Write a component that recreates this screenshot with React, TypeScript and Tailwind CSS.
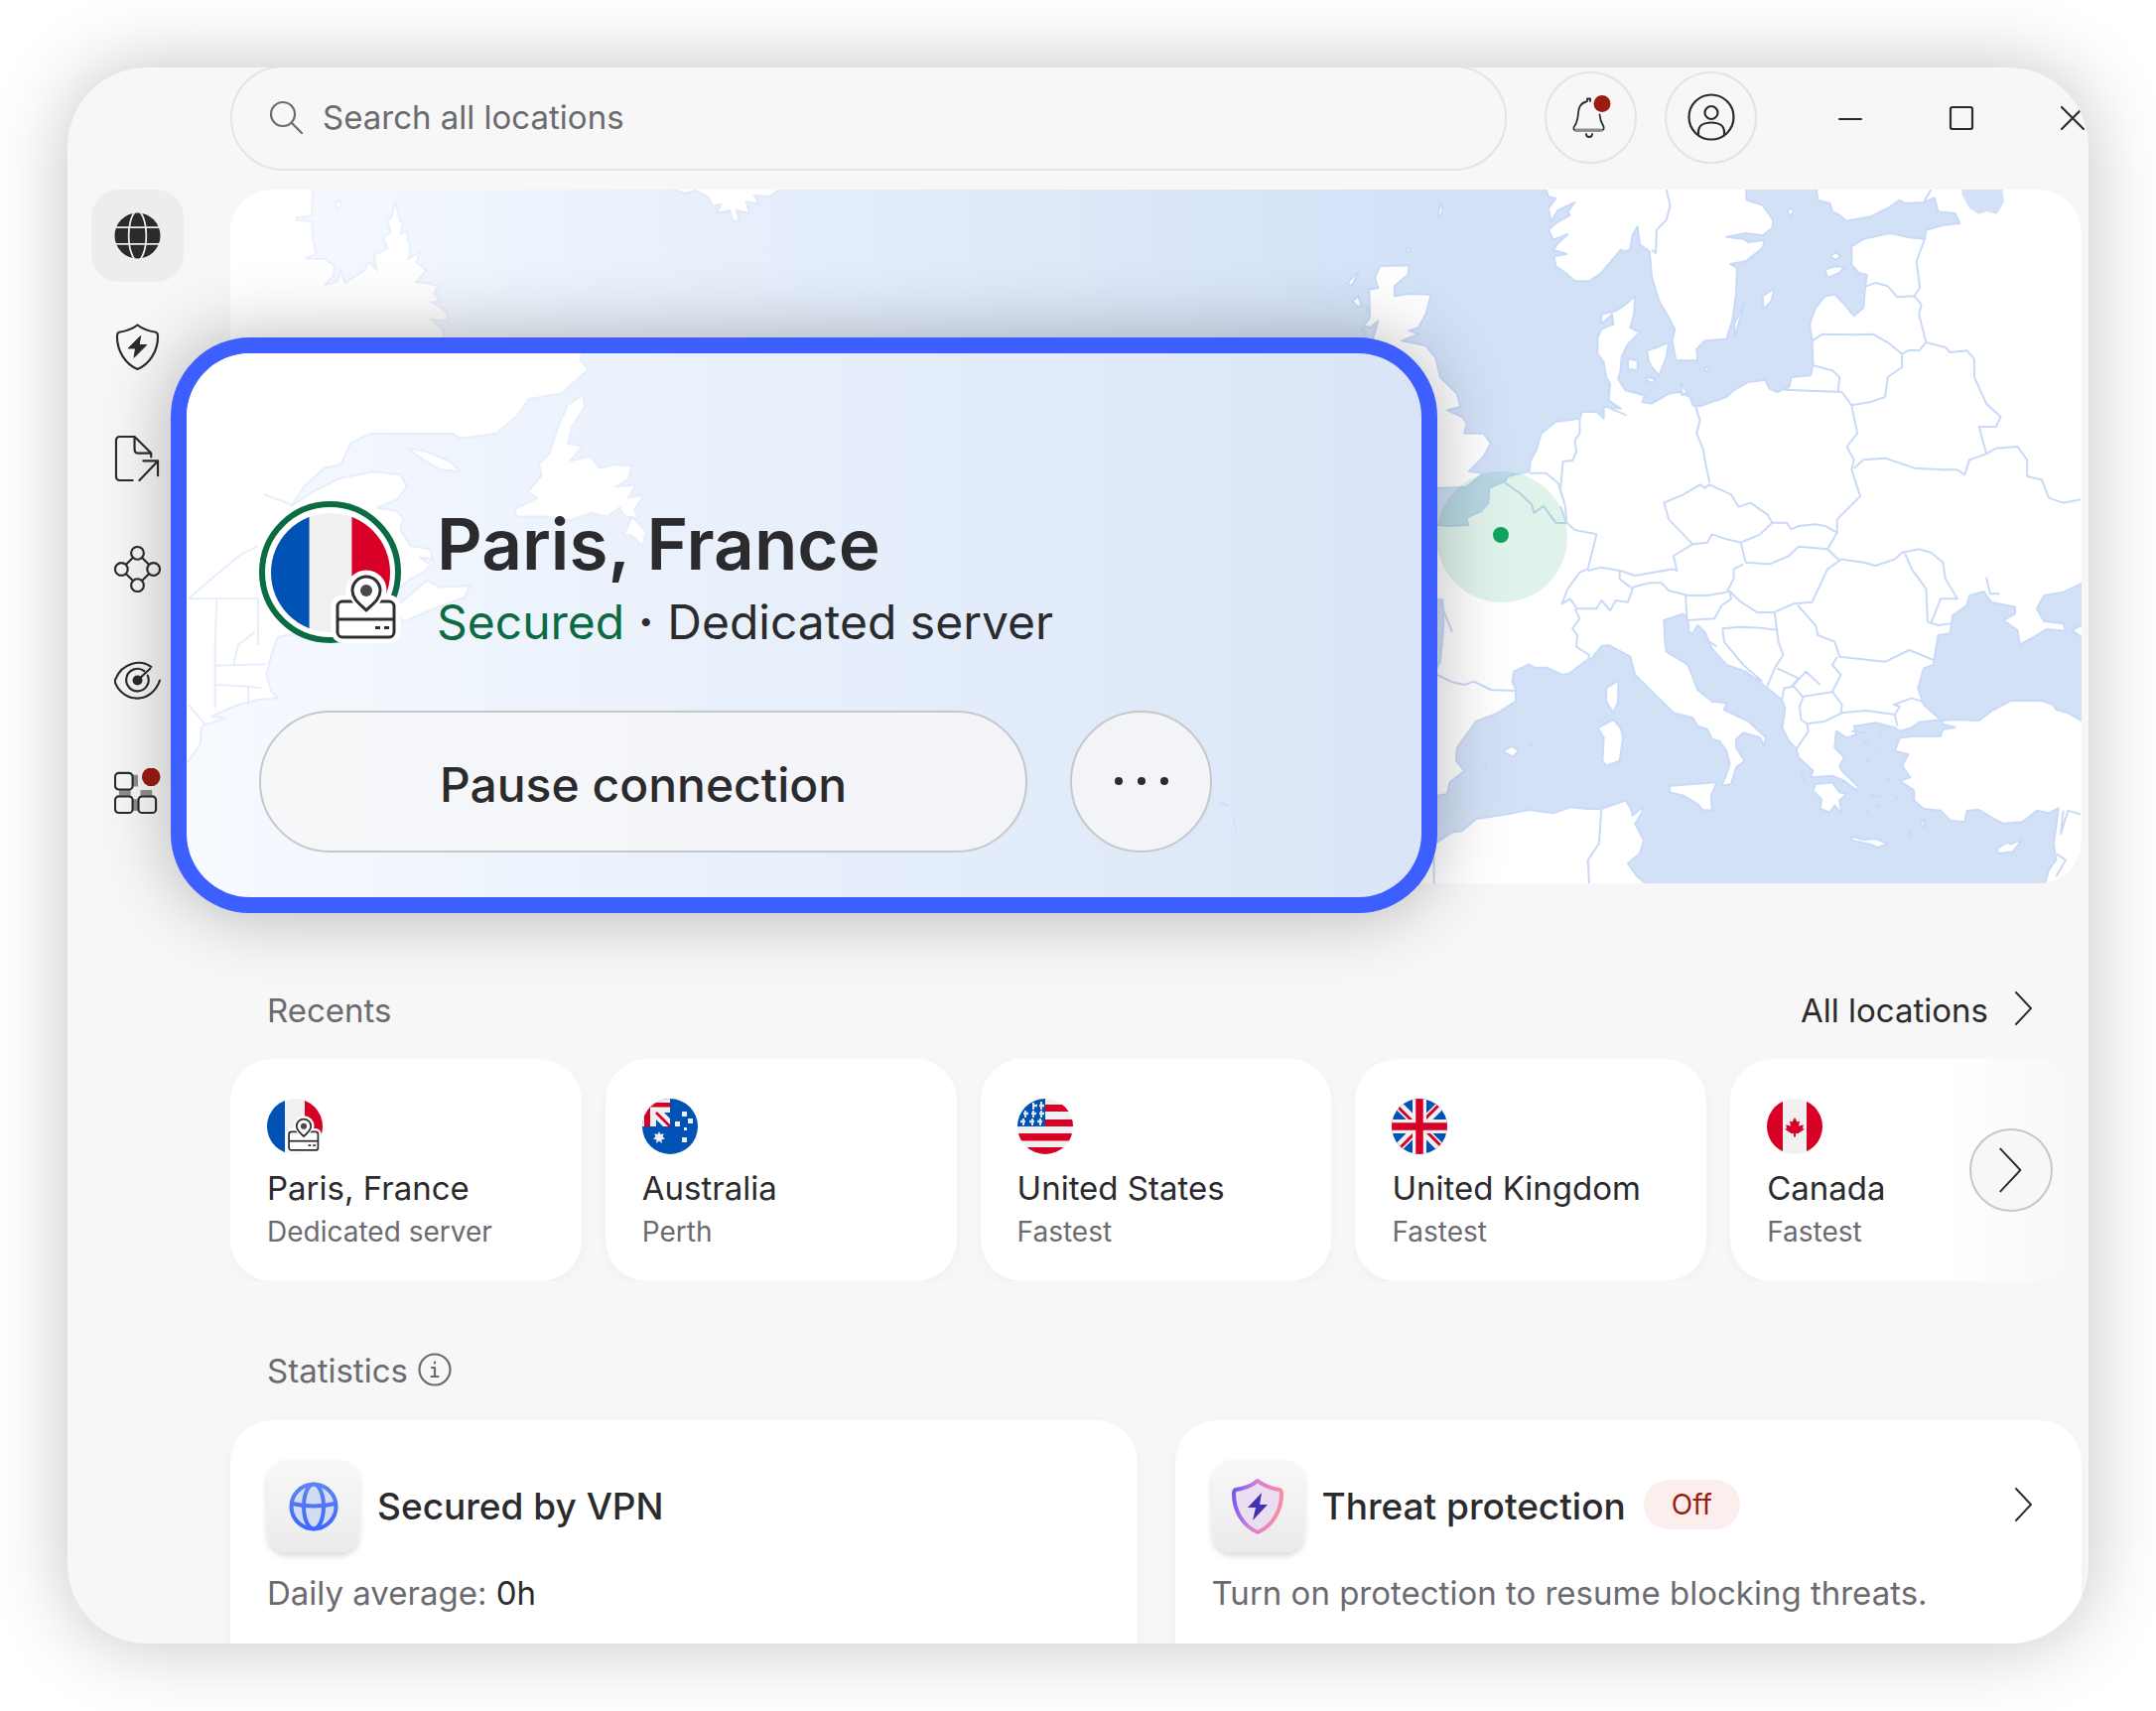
import React from "react";

const EUROPE_LAND = [
  // Norway and Sweden
  "M325,400 325,423 330,445 345,450 330,480 335,520 350,485 385,462 370,490 375,500 345,525 330,545 340,575 370,558 350,585 340,605 368,618 342,625 345,655 370,680 385,700 415,700 440,675 460,640 480,605 490,610 500,603 505,560 515,535 520,590 540,610 545,690 560,760 580,810 593,845 587,880 595,940 640,940 638,905 655,880 700,875 712,820 720,740 722,660 708,648 740,640 775,600 780,575 745,582 735,572 700,566 740,555 775,562 795,540 797,515 775,470 742,455 740,400Z",
  // Mainland
  "M885,400 890,455 915,465 920,490 935,500 950,518 1000,505 1040,475 1060,455 1070,465 1110,462 1132,448 1140,490 1175,495 1185,525 1150,530 1115,545 1112,572 1080,568 1040,555 985,572 960,595 960,650 975,675 992,680 988,720 985,780 965,805 945,770 925,740 905,745 885,780 873,830 878,880 880,950 875,985 835,990 830,1020 805,1035 790,1025 780,998 745,1005 715,1030 700,1050 670,1065 645,1078 630,1075 625,1050 600,1035 580,1040 545,1070 525,1065 530,1045 490,1030 475,995 480,970 482,930 495,890 520,855 500,840 508,800 510,745 490,770 470,790 440,800 440,830 462,800 465,830 440,845 432,870 432,920 445,945 450,990 458,1010 455,1060 480,1085 445,1080 445,1115 430,1095 400,1095 395,1115 345,1125 315,1160 305,1210 292,1245 290,1275 270,1282 245,1290 240,1305 207,1325 205,1370 190,1395 160,1415 163,1437 120,1440 60,1430 60,1660 110,1662 112,1740 105,1850 90,1890 0,1900 0,2255 99,2255 120,2250 125,2215 155,2180 138,2150 140,2110 180,2030 225,2005 262,1970 262,1935 255,1910 258,1880 290,1858 300,1868 325,1868 360,1890 375,1885 405,1850 420,1840 440,1803 455,1800 500,1835 510,1890 545,1940 590,2005 630,2020 640,2045 660,2055 670,2085 685,2090 700,2120 707,2160 700,2190 690,2225 710,2220 720,2170 738,2150 720,2110 720,2085 735,2065 770,2080 778,2105 782,2080 745,2030 695,1995 700,1975 670,1970 640,1935 620,1860 575,1820 572,1785 570,1725 610,1705 620,1725 622,1760 630,1765 640,1740 655,1760 670,1810 700,1860 740,1880 785,1930 815,1965 822,1990 816,2050 830,2090 845,2115 850,2140 880,2180 875,2200 920,2195 945,2210 970,2240 975,2230 940,2180 935,2165 945,2140 925,2110 928,2060 950,2080 970,2070 965,2045 1010,2035 1050,2050 1060,2060 1085,2050 1100,2033 1145,2026 1110,1980 1098,1930 1110,1870 1130,1860 1140,1770 1165,1765 1170,1710 1200,1680 1205,1650 1235,1638 1250,1670 1300,1685 1300,1705 1275,1725 1305,1755 1310,1798 1340,1775 1365,1752 1405,1757 1400,1735 1360,1728 1345,1690 1360,1650 1400,1640 1436,1615 1520,1590 1520,400Z",
  // Turkey and the Levant
  "M1520,2050 1436,2027 1410,2005 1385,1995 1380,1980 1355,1968 1290,1968 1250,2000 1225,2028 1175,2025 1148,2028 1150,2040 1175,2048 1150,2055 1145,2075 1090,2075 1060,2080 1050,2120 1078,2130 1065,2165 1082,2200 1060,2210 1090,2240 1090,2270 1110,2295 1145,2300 1165,2330 1195,2335 1200,2300 1225,2298 1250,2320 1275,2340 1315,2335 1345,2300 1370,2308 1390,2293 1385,2350 1380,2400 1385,2450 1370,2480 1360,2530 1520,2530Z",
  // North Africa
  "M99,2395 130,2365 150,2362 180,2325 240,2312 290,2298 340,2308 375,2290 410,2295 440,2295 490,2270 500,2290 505,2315 525,2290 525,2305 510,2340 528,2390 520,2430 495,2460 515,2500 540,2530 0,2530 0,2440Z",
  // Great Britain
  "M-21,655 41,652 38,680 10,715 10,745 40,738 86,740 75,800 60,840 40,850 60,860 25,880 75,895 95,930 105,990 140,1040 147,1080 120,1090 150,1110 160,1130 155,1160 195,1160 210,1190 195,1230 165,1275 195,1280 160,1322 105,1325 0,1350 -60,1100 -34,870 -24,820 -40,840 -55,835 -41,810 -43,725 -24,720 -31,690Z",
  // Islands
  "M-65,670 -70,690 -80,715 -88,705Z M-78,760 -65,745 -58,778 -68,775Z M-48,780l5,8 -5,5z M-60,840l10,15 -6,8z",
  "M105,462l5,20 -3,20 -6,0z M36,600l8,5 -2,8 -8,-4z",
  "M495,935 515,940 515,970 495,965Z M535,910 555,900 580,885 575,930 560,985 545,960 538,940Z M535,990l18,5 -6,12 -12,-6z M605,1010 618,1035 608,1045Z M657,958l8,8 -6,8 -4,-6z",
  "M800,722 793,760 777,785 775,745Z M738,765 718,865 716,830Z M905,665 925,655 945,657 935,675 910,690Z M925,612l12,12 -10,12 -10,-10z M832,478l8,10 -6,14 -8,-10z",
  "M885,2220 920,2215 935,2245 950,2250 935,2270 940,2310 925,2285 915,2305 895,2295 897,2265 880,2240Z",
  "M960,2378 985,2388 1010,2385 1035,2400 1015,2412 1000,2403 960,2390Z M1262,2415 1285,2395 1290,2402 1315,2388 1295,2425 1265,2430Z",
  "M582,2225 610,2222 680,2215 668,2255 670,2300 650,2298 640,2280 610,2255 582,2245Z",
  "M432,2050 465,2025 480,2050 485,2080 478,2150 450,2165 442,2150 445,2080Z M450,1930 475,1908 475,1970 465,2005 450,1970Z M235,2120 255,2105 268,2120 255,2138Z M1105,2335l8,-8 -2,22 -6,-2z",
  "M1440,1738 1418,1755 1440,1778Z",
].join(" ");

const EUROPE_BORDERS = [
  "M575,423 583,470 575,515 555,545 553,615 545,605",
  "M1125,423 1110,462",
  "M635,1075 645,1120 638,1160 652,1210 655,1240 665,1310",
  "M645,1315 610,1345 570,1370 580,1420 600,1450 630,1495 660,1490 670,1465 700,1480 730,1490 770,1465 795,1430 785,1405 750,1370 725,1382 710,1345 665,1315 655,1325Z",
  "M820,1028 940,1035 960,1075 972,1160 950,1200 965,1240 960,1270 978,1350 930,1420 930,1460",
  "M795,1430 825,1430 835,1450 850,1440 885,1435 905,1440 930,1460 910,1510",
  "M910,1510 850,1502 830,1530 790,1555 740,1550 730,1490",
  "M965,1265 985,1240 1030,1235 1090,1265 1150,1270 1180,1270 1195,1285 1205,1240 1240,1222 1260,1205 1305,1200 1325,1240 1325,1290 1355,1300 1370,1355 1400,1370 1436,1360",
  "M1115,885 1155,900 1165,915 1200,910 1215,935 1215,990 1240,1070 1270,1110 1260,1140 1225,1140 1240,1222",
  "M878,880 900,860 965,862 1005,860 1040,890 1065,920 1065,960 1035,990 1030,1050 1000,1065 960,1075",
  "M1065,920 1080,908 1100,910 1115,885 1100,800 1105,770 1090,745 1055,748 1035,715 1010,705 990,715",
  "M1112,572 1095,640 1102,720 1090,745",
  "M880,955 920,970 935,990 932,1032",
  "M395,1115 395,1160 385,1180 388,1215 380,1242 360,1245 355,1330 365,1380",
  "M290,1280 325,1280 350,1310 365,1380 368,1430 385,1452 430,1465 412,1570 395,1580 370,1630 358,1675 375,1660 390,1690 430,1690 440,1665 458,1695 470,1665 495,1670 505,1630 478,1600 478,1575 440,1565 412,1575",
  "M240,1310 270,1340 295,1375 300,1400 320,1380 345,1430 368,1432 355,1380",
  "M480,1575 510,1590 590,1570 597,1575 590,1530 630,1495",
  "M505,1625 540,1612 565,1612 580,1635 620,1650 660,1650 700,1640 715,1600 715,1570 735,1555",
  "M385,1690 395,1720 380,1750 390,1770 388,1805 415,1830 412,1845",
  "M615,1650 618,1725 675,1720 690,1680 710,1660 705,1635 730,1670 765,1702 800,1700 840,1675 878,1670 910,1570 935,1545 910,1510",
  "M935,1540 985,1550 1010,1560 1050,1540 1065,1520 1100,1510 1125,1520 1150,1550 1155,1600 1180,1660 1145,1660 1125,1735",
  "M1070,1520 1085,1570 1115,1630 1118,1730 1140,1740 1165,1735",
  "M800,1700 808,1790 818,1830 800,1870 785,1925",
  "M808,1755 770,1748 730,1745 692,1750 695,1790 735,1860 775,1910",
  "M848,1680 885,1740 890,1770 925,1790 935,1835 1030,1850 1080,1815 1130,1845",
  "M930,1835 920,1860 938,1890 920,1940 940,1980 938,2005 990,1998 1050,2010 1055,2045",
  "M1050,2010 1060,1985 1048,1980 1085,1960 1110,1972",
  "M920,1942 860,1955 852,1985 855,2025 868,2038 905,2030 940,2005",
  "M868,2040 870,2060 845,2115 M815,1965 820,1930 840,1925 858,1955",
  "M840,1920 865,1880 895,1920 M805,1870 850,1900 835,1925",
  "M99,1890 130,1912 155,1920 175,1910 210,1935 260,1938",
  "M1240,1595 1248,1645 1268,1645 M1400,2300 1395,2370 1410,2300 1436,2312 M1385,2430 1405,2450 1385,2500",
  "M440,2295 435,2400 412,2450 415,2530 M92,2440 92,2530 M458,1085 492,1105 M103,1665 130,1760",
  "M940,2210l28,25 M960,2060l30,5 M1015,2070l8,6 M985,2090l10,10 M1010,2110l6,6 M990,2150l10,4 M1030,2200l10,8 M1000,2250l20,10 M1020,2280l-10,12 M1050,2260l10,6 M855,2180l6,30 M990,2300l6,8 M1080,2360l4,20 M735,1885l40,25 M665,1790l15,15 M198,2160l6,20 M288,2095l8,10 M433,2025l4,10 M505,1900l6,10",
].join(" ");

function Europe() {
  return (
    <svg x="1400" y="50" width="760" height="840" viewBox="0 0 1568 2520" preserveAspectRatio="none" overflow="visible">
      <path d={EUROPE_LAND} fill="#fff" stroke="#c8daf8" strokeWidth="2" strokeLinejoin="round" vectorEffect="non-scaling-stroke" />
      <path d="M1187,400 1190,440 1205,480 1225,497 1240,490 1262,497 1277,460 1272,400Z" fill="#d3e1f7" />
      <path d={EUROPE_BORDERS} fill="none" stroke="#c8daf8" strokeWidth="2" strokeLinejoin="round" vectorEffect="non-scaling-stroke" />
    </svg>
  );
}

function WorldMap() {
  return (
    <svg viewBox="232 191 1865 699" preserveAspectRatio="xMaxYMid slice" className="block h-full w-full" aria-hidden="true">
      <defs>
        <linearGradient id="sea" gradientUnits="userSpaceOnUse" x1="232" y1="0" x2="1440" y2="0">
          <stop offset="0" stopColor="#f8fbff" />
          <stop offset="0.3" stopColor="#ebf2fc" />
          <stop offset="1" stopColor="#d3e1f7" />
        </linearGradient>
      </defs>
      <rect x="232" y="191" width="1865" height="699" fill="url(#sea)" />
      <svg x="60" y="50" width="700" height="560" viewBox="0 0 1568 1568" preserveAspectRatio="none" overflow="visible">
        <path
          d="M380,380 575,380 570,430 570,470 535,474 535,482 570,484 572,540 580,575 555,590 600,590 620,610 618,640 598,665 625,655 635,625 645,658 690,620 698,598 715,620 710,580 740,560 730,530 748,515 738,480 748,475 758,430 768,480 775,490 770,520 785,510 785,540 792,545 788,590 815,570 805,600 828,622 805,655 855,665 845,690 860,710 840,712 875,740 875,765 840,762 865,790 870,840 380,840Z M622,430l10,-5 4,15 -10,12z"
          fill="#fff"
          stroke="#e8f0fc"
          strokeWidth="2"
          vectorEffect="non-scaling-stroke"
        />
      </svg>
      <path d="M672,188 690,195 700,192 713,198 718,208 726,206 722,215 735,212 738,222 745,224 742,212 755,215 752,203 765,206 760,197 775,198 790,188Z" fill="#fff" stroke="#dfe9fa" strokeWidth="2" />
      <Europe />
      <circle cx="1513" cy="541" r="66" fill="#0fa55f" fillOpacity="0.13" />
      <circle cx="1512" cy="539" r="8" fill="#12a45f" />
    </svg>
  );
}

function AtlanticMap() {
  return (
    <svg viewBox="188 356 1244 548" preserveAspectRatio="xMinYMin slice" className="h-full w-full" aria-hidden="true">
      <defs>
        <linearGradient id="atlantic" x1="0" y1="0" x2="1" y2="0">
          <stop offset="0" stopColor="#f7faff" />
          <stop offset="0.35" stopColor="#ebf2fc" />
          <stop offset="1" stopColor="#d9e5f7" />
        </linearGradient>
      </defs>
      <rect x="188" y="356" width="1244" height="548" fill="url(#atlantic)" />
      <g fill="#fff" stroke="#e6eefc" strokeWidth="2" strokeLinejoin="round">
        <svg x="60" y="420" width="500" height="480" viewBox="0 0 1500 1440" overflow="visible">
          <path
            vectorEffect="non-scaling-stroke"
            d="M370,-210 1581,-210 1575,-172 1599,-144 1556,-105 1519,-71 1420,-54 1380,0 1320,50 1210,65 1190,52 940,50 880,80 850,145 800,155 740,210 700,270 760,230 850,185 950,165 1030,175 1050,210 1020,250 960,275 1020,285 1040,310 1030,340 1060,390 1120,400 1130,440 1100,470 1060,490 1000,540 950,560 830,600 750,650 660,665 640,720 625,780 640,830 660,850 600,855 540,870 460,905 500,910 430,935 425,990 390,1040 370,1050Z"
          />
          <path vectorEffect="non-scaling-stroke" d="M1010,580 1110,495 1150,515 1240,510 1225,545 1130,580 1040,620Z M1050,95 1110,105 1180,135 1210,165 1150,160 1100,130Z M1090,425l35,5 -10,12z" />
          <path vectorEffect="non-scaling-stroke" fill="none" d="M390,550H600 V690 M390,550 470,480 550,415 600,390 M475,550 470,700 470,880 M590,650 540,690 525,750 M470,752 620,748 M470,810 570,815 610,820 M570,815 570,870 M620,235 700,265 M390,870 440,930" />
        </svg>
        <svg x="160" y="340" width="1300" height="590" viewBox="0 0 1568 1568" preserveAspectRatio="none" overflow="visible">
          <path
            vectorEffect="non-scaling-stroke"
            d="M515,155 518,185 502,240 497,285 515,290 500,330 525,318 535,350 555,340 575,345 570,380 555,400 580,395 570,430 590,420 578,460 582,485 565,478 560,455 545,480 525,470 500,490 470,480 435,480 432,460 460,430 448,415 465,370 462,340 475,310 485,240 497,180Z M575,480 592,520 588,560 575,530 565,530Z"
          />
          <path vectorEffect="non-scaling-stroke" stroke="#d3e0f6" fill="none" d="M1290,1245l10,10 M1306,1290l3,35" />
        </svg>
      </g>
    </svg>
  );
}

type IconProps = { className?: string };

function ServerBadge({ className, bold }: IconProps & { bold?: boolean }) {
  const w = bold ? 3 : 3.4;
  return (
    <svg viewBox="0 0 66 70" className={className} aria-hidden="true" overflow="visible" fill="#fff" stroke="#2f2f31" strokeWidth={w} strokeLinejoin="round">
      <g stroke="#fff" strokeWidth="13">
        <rect x="4" y="30" width="57" height="35" rx="5" />
        <circle cx="33" cy="19" r="14" />
      </g>
      <rect x="4" y="30" width="57" height="36" rx="5" />
      <path d="M4 48h57" fill="none" />
      <path d="M33 38c-6-6-14-11-14-20a14 14 0 0 1 28 0c0 9-8 14-14 20z" stroke="#fff" strokeWidth="9" />
      <path d="M33 39c-6-6-14-11-14-20a14 14 0 0 1 28 0c0 9-8 14-14 20z" />
      <circle cx="33" cy="19" r="6" fill="#4a4a4c" stroke="none" />
      <path d="M42 56.500h5M51 56.500h5" />
    </svg>
  );
}

type Country = "fr" | "au" | "us" | "gb" | "ca";

function Flag({ country, className }: { country: Country; className?: string }) {
  const clip = `flag-${country}`;
  return (
    <svg viewBox="0 0 56 56" className={className} aria-hidden="true">
      <defs>
        <clipPath id={clip}>
          <circle cx="28" cy="28" r="28" />
        </clipPath>
      </defs>
      <g clipPath={`url(#${clip})`}>
        {country === "fr" && (
          <>
            <path fill="#f0f0f0" d="M0 0h56v56H0z" />
            <path fill="#0052b4" d="M0 0h18v56H0z" />
            <path fill="#d80027" d="M38 0h18v56H38z" />
          </>
        )}
        {country === "au" && (
          <>
            <path fill="#0052b4" d="M0 0h56v56H0z" />
            <path fill="#f0f0f0" d="M0 0h28v28H0z" />
            <path fill="#d80027" d="M2 28V4h26v4.500H8V28z" />
            <path fill="#0052b4" d="M28 14v6l-6-6zM14 21l7 7h-7z" />
            <path stroke="#d80027" strokeWidth="2.600" d="M14 14l14 14" />
            <path fill="#f0f0f0" d="M17 33l1.500 3 3.500-.7-1.500 3L23 40.500l-3.300.8V45L17 42.500 14.300 45v-3.700l-3.300-.8 2.500-2.200-1.500-3 3.500.7z" />
            <path fill="#f0f0f0" d="M40 13h5v5h-5zM46 20h5v5h-5zM33 23h5v5h-5zM42 29h3v3h-3zM40 39h5v5h-5z" />
          </>
        )}
        {country === "us" && (
          <>
            <path fill="#f0f0f0" d="M0 0h56v56H0z" />
            <path fill="#d80027" d="M28 6h28v7H28zM28 21h28v7H28zM0 35h56v7.500H0zM6 49h44v7H6z" />
            <path fill="#0052b4" d="M0 0h28v28H0z" />
            <path stroke="#dfe6f2" strokeWidth="2.400" d="M15 7h5M22 7h5M6 15h5M14 15h5M22 15h5M3 23h5M12 23h5M20 23h5" />
            <path stroke="#dfe6f2" strokeWidth="2" d="M16 4v7M24 3v8M8 12v7M16 12v7M24 12v7M6 20v7M15 20v7M23 20v7" />
          </>
        )}
        {country === "gb" && (
          <>
            <path fill="#0052b4" d="M0 0h56v56H0z" />
            <path stroke="#f0f0f0" strokeWidth="9" d="M4 4l48 48M52 4L4 52" />
            <path stroke="#d80027" strokeWidth="3" d="M6 8l16 16M48 6L34 20M50 48L34 32M8 50l16-16" />
            <path stroke="#f0f0f0" strokeWidth="14" d="M28 0v56M0 28h56" />
            <path stroke="#d80027" strokeWidth="7.500" d="M28 0v56M0 28h56" />
          </>
        )}
        {country === "ca" && (
          <>
            <path fill="#f0f0f0" d="M0 0h56v56H0z" />
            <path fill="#d80027" d="M0 0h16v56H0zM40 0h16v56H40z" />
            <path fill="#d80027" d="M28 19l2.500 4.500 2.500-1-1 5 5-1-1 3 1.500 1.500-6 4h-2.500v3.500h-2V35H24.500l-6-4 1.500-1.500-1-3 5 1-1-5 2.500 1z" />
          </>
        )}
      </g>
    </svg>
  );
}

function Chevron({ className, weight = 2 }: IconProps & { weight?: number }) {
  return (
    <svg viewBox="0 0 20 36" className={className} aria-hidden="true" fill="none" stroke="#2f2f31" strokeWidth={weight} strokeLinecap="round" strokeLinejoin="round">
      <path d="M2 2l15 16L2 34" />
    </svg>
  );
}

const line = { fill: "none", stroke: "#2b2b2d", strokeWidth: 2.2, strokeLinecap: "round", strokeLinejoin: "round" } as const;

const navItems = [
  {
    label: "VPN",
    icon: (
      <>
        <circle cx="24" cy="24" r="23.500" fill="#2b2b2d" />
        <path d="M0 15.500h48M0 32.500h48" stroke="#ededed" strokeWidth="1.800" />
        <path d="M24-4C12 8 12 40 24 52M24-4c12 12 12 44 0 56" fill="none" stroke="#ededed" strokeWidth="1.800" />
      </>
    ),
  },
  {
    label: "Threat protection",
    icon: (
      <g {...line}>
        <path d="M24 1.500c5 4 13 6.500 19 7.500 2 1 2 2 2 4 0 16-9 29-21 34C12 42 3 29 3 13c0-2 0-3 2-4 6-1 14-3.500 19-7.500z" />
        <path d="M27 13L14.500 25.500H22L20.500 35 33.500 22H26z" fill="#2b2b2d" strokeWidth="1" />
      </g>
    ),
  },
  {
    label: "File sharing",
    icon: (
      <g {...line}>
        <path d="M19 47H6q-4 0-4-4V6q0-4 4-4h15l17 17v4M21 2v13q0 4 4 4h13" />
        <path d="M26 47l19-20M30 27h15v15" />
      </g>
    ),
  },
  {
    label: "Meshnet",
    icon: (
      <g {...line}>
        <circle cx="24" cy="7.500" r="6.500" />
        <circle cx="24" cy="40.500" r="6.500" />
        <circle cx="7.500" cy="24" r="6.500" />
        <circle cx="40.500" cy="24" r="6.500" />
        <path d="M19 12.500L12.500 19M29 12.500l6.500 6.500M12.500 29l6.500 6.500M35.500 29L29 35.500" />
      </g>
    ),
  },
  {
    label: "Dark web monitor",
    icon: (
      <g {...line}>
        <path d="M38 10C27 2 8 6 1.500 22.500c-1 2-1 3 0 5C10 47 38 49 47 24" />
        <path d="M31 14.500a11.500 11.500 0 1 0 3.500 4.500" />
        <circle cx="24" cy="24" r="4" fill="#2b2b2d" />
        <path d="M24 24L37 12" />
      </g>
    ),
  },
  {
    label: "Apps",
    icon: (
      <g {...line}>
        <path d="M22 7v12M5 25h12M27 25h12M22 32v12" stroke="#8f8f91" strokeWidth="5" strokeLinecap="butt" />
        <rect x="1" y="5" width="18" height="17" rx="4" />
        <rect x="1" y="29" width="18" height="17" rx="4" />
        <rect x="25" y="29" width="18" height="17" rx="4" />
        <circle cx="38" cy="9" r="9.500" fill="#9a1c12" stroke="none" />
      </g>
    ),
  },
];

const recents: { country: Country; name: string; detail: string }[] = [
  { country: "fr", name: "Paris, France", detail: "Dedicated server" },
  { country: "au", name: "Australia", detail: "Perth" },
  { country: "us", name: "United States", detail: "Fastest" },
  { country: "gb", name: "United Kingdom", detail: "Fastest" },
  { country: "ca", name: "Canada", detail: "Fastest" },
];

function Sidebar() {
  return (
    <nav className="flex w-[164px] shrink-0 flex-col gap-[19px] pt-[123px] pl-6" aria-label="Main">
      {navItems.map((item, i) => (
        <button
          key={item.label}
          type="button"
          aria-label={item.label}
          className={`flex size-[93px] items-center justify-center rounded-[28px] ${i === 0 ? "bg-[#ededed]" : ""}`}
        >
          <svg viewBox="0 0 48 48" className="size-[47px]" aria-hidden="true">
            {item.icon}
          </svg>
        </button>
      ))}
    </nav>
  );
}

function Header() {
  return (
    <header className="-mt-0.5 -mr-[47px] flex items-center">
      <label className="flex h-[106px] min-w-0 flex-1 items-center rounded-full border-2 border-[#e4e4e5] pb-0.5 pl-9">
        <svg viewBox="0 0 36 36" className="size-9 shrink-0" aria-hidden="true" {...line} stroke="#6b6b6f">
          <circle cx="15" cy="15" r="12" />
          <path d="M24 24l10 10" />
        </svg>
        <input
          type="search"
          aria-label="Search all locations"
          placeholder="Search all locations"
          className="ml-[19px] min-w-0 flex-1 bg-transparent text-[33px] leading-11 outline-none placeholder:text-[#6b6b6f]"
        />
      </label>
      <button type="button" aria-label="Notifications" className="mb-0.5 ml-[38px] flex size-[93px] shrink-0 items-center justify-center rounded-full border-2 border-[#e4e4e5]">
        <svg viewBox="0 0 48 48" className="size-12" aria-hidden="true" {...line} strokeWidth={1.8}>
          <path d="M20 8V5.500h3V8" />
          <path d="M19 8.500c-5 1-7.500 5-8 11-.5 7-1 9.500-3.500 13C5.500 35 6 37.500 9.500 37.500h24c3.500 0 4-2.500 2.500-5-2.500-4-3-6-3.500-11" />
          <path d="M9 37h25" stroke="#8f8f91" strokeWidth="3" />
          <path d="M19 41c0 4 6 4 6 0" />
          <circle cx="35" cy="10.500" r="8.500" fill="#9a1c12" stroke="none" />
        </svg>
      </button>
      <button type="button" aria-label="Account" className="mb-0.5 ml-7 flex size-[93px] shrink-0 items-center justify-center rounded-full border-2 border-[#e4e4e5]">
        <svg viewBox="0 0 48 48" className="size-12" aria-hidden="true" {...line}>
          <circle cx="24" cy="24" r="22.500" />
          <circle cx="24" cy="19.500" r="6.500" />
          <path d="M11 42v-3c0-6 5-9.500 13-9.500S37 33 37 39v3" />
        </svg>
      </button>
      <div className="ml-[38px] flex shrink-0">
        {[
          { label: "Minimize", d: "M2 14h22" },
          { label: "Maximize", d: "M4 2h18q2 0 2 2v18q0 2-2 2H4q-2 0-2-2V4q0-2 2-2z" },
          { label: "Close", d: "M2 2l22 22M24 2L2 24" },
        ].map((c) => (
          <button key={c.label} type="button" aria-label={c.label} className="flex h-24 w-28 items-center justify-center">
            <svg viewBox="0 0 26 26" className="size-[26px]" aria-hidden="true" {...line}>
              <path d={c.d} />
            </svg>
          </button>
        ))}
      </div>
    </header>
  );
}

function ConnectionCard() {
  return (
    <div className="absolute top-[149px] right-[649px] left-[-60px] z-10 rounded-[80px] border-16 border-[#3d5fff] bg-[#3d5fff] shadow-[0_0_72px_rgba(0,0,0,0.28)]">
      <div className="absolute inset-0 overflow-hidden rounded-[64px]">
        <AtlanticMap />
      </div>
      <div className="relative px-[73px] pt-[149px] pb-[45px]">
        <div className="flex h-[143px] items-center gap-9">
          <div className="relative flex size-[143px] shrink-0 items-center justify-center rounded-full border-6 border-[#0b6b43] bg-white">
            <Flag country="fr" className="size-[120px]" />
            <ServerBadge bold className="absolute -right-1 -bottom-1 w-[66px]" />
          </div>
          <div className="pt-3 text-[#2b2b2d]">
            <h1 className="text-[71px] leading-[88px] font-semibold">Paris, France</h1>
            <p className="text-[48px] leading-[70px]">
              <span className="text-[#0b6b43]">Secured</span> <span className="font-bold">·</span> Dedicated server
            </p>
          </div>
        </div>
        <div className="mt-[68px] flex gap-[43px]">
          <button type="button" className="h-[143px] w-[774px] rounded-full border-2 border-[#c6c7c9] bg-[#f6f6f7]/80 pt-1.5 text-[48px] font-medium text-[#2b2b2d]">
            Pause connection
          </button>
          <button type="button" aria-label="More options" className="flex size-[143px] items-center justify-center rounded-full border-2 border-[#c6c7c9] bg-[#f6f6f7]/80">
            <svg viewBox="0 0 56 12" className="w-14" aria-hidden="true" fill="#2b2b2d">
              <circle cx="5" cy="5" r="4" />
              <circle cx="28" cy="5" r="4" />
              <circle cx="51" cy="5" r="4" />
            </svg>
          </button>
        </div>
      </div>
    </div>
  );
}

function Recents() {
  return (
    <section>
      <div className="mt-[106px] flex items-center justify-between pr-12 pl-[37px] text-[33px] leading-11">
        <h2 className="text-[#6b6b6f]">Recents</h2>
        <a href="#locations" className="flex items-center gap-[26px] text-[#2b2b2d]">
          All locations
          <Chevron className="mb-1 h-9 w-5" />
        </a>
      </div>
      <div className="relative mt-[27px] overflow-hidden">
        <ul className="grid grid-cols-5 gap-6">
          {recents.map((r) => (
            <li key={r.name} className="rounded-[42px] bg-white px-[37px] pt-10 pb-[29px] whitespace-nowrap shadow-[0_4px_14px_rgba(0,0,0,0.03)]">
              <div className="relative size-14">
                <Flag country={r.country} className="size-14" />
                {r.country === "fr" && <ServerBadge className="absolute right-0.5 bottom-0.5 w-[34px]" />}
              </div>
              <p className="mt-[11px] text-[33px] leading-[46px] text-[#2b2b2d]">{r.name}</p>
              <p className="text-[28px] leading-[42px] text-[#6b6b6f]">{r.detail}</p>
            </li>
          ))}
        </ul>
        <div className="absolute inset-y-0 right-0 flex w-[142px] items-center justify-center bg-linear-to-r from-transparent to-[#f7f7f7]">
          <button type="button" aria-label="Show more" className="flex size-[84px] items-center justify-center rounded-full border-2 border-[#c6c7c9] bg-[#f7f7f7]">
            <Chevron className="h-12 w-7" weight={1.5} />
          </button>
        </div>
      </div>
    </section>
  );
}

function IconTile({ children }: { children: React.ReactNode }) {
  return (
    <span className="flex size-[93px] shrink-0 items-center justify-center rounded-[20px] bg-linear-to-b from-[#f8f8f8] to-[#ebebeb] shadow-[0_4px_6px_rgba(0,0,0,0.14)]">
      {children}
    </span>
  );
}

function Statistics() {
  return (
    <section>
      <div className="mt-[68px] flex items-center gap-2.5 pl-[37px] text-[33px] leading-11 text-[#6b6b6f]">
        <h2>Statistics</h2>
        <svg viewBox="0 0 34 34" className="mb-0.5 size-[34px]" aria-hidden="true" {...line} stroke="#6b6b6f">
          <circle cx="17" cy="17" r="15.500" />
          <path d="M14 15h3v8.500M13.500 24h7M17 9.500v1" />
        </svg>
      </div>
      <div className="mt-7 grid grid-cols-2 gap-[38px] text-[33px] leading-11 text-[#6b6b6f]">
        <article className="rounded-[42px] bg-white px-[37px] pt-10 pb-20 shadow-[0_4px_14px_rgba(0,0,0,0.03)]">
          <div className="flex items-center gap-[18px]">
            <IconTile>
              <svg viewBox="0 0 50 50" className="size-[50px]" aria-hidden="true" fill="none" stroke="url(#globe-blue)" strokeWidth="4">
                <defs>
                  <linearGradient id="globe-blue" gradientUnits="userSpaceOnUse" x1="0" y1="0" x2="0" y2="50">
                    <stop offset="0" stopColor="#5f86ef" />
                    <stop offset="1" stopColor="#3a66ff" />
                  </linearGradient>
                </defs>
                <circle cx="25" cy="25" r="22.500" fill="#d3dcf3" />
                <ellipse cx="25" cy="25" rx="10" ry="22.500" />
                <path d="M3 22q22 5 44 0" />
              </svg>
            </IconTile>
            <h3 className="text-[37px] font-medium text-[#2b2b2d]">Secured by VPN</h3>
          </div>
          <p className="mt-[19px]">
            Daily average: <span className="text-[#2b2b2d]">0h</span>
          </p>
        </article>
        <article className="rounded-[42px] bg-white px-[37px] pt-10 pb-20 shadow-[0_4px_14px_rgba(0,0,0,0.03)]">
          <div className="flex items-center gap-[18px]">
            <IconTile>
              <svg viewBox="0 0 54 58" className="h-[58px] w-[54px]" aria-hidden="true" strokeLinejoin="round">
                <defs>
                  <linearGradient id="shield-pink" x1="0" y1="0" x2="1" y2="0.2">
                    <stop offset="0" stopColor="#6a55f5" />
                    <stop offset="0.5" stopColor="#d57fd8" />
                    <stop offset="1" stopColor="#f98ba2" />
                  </linearGradient>
                </defs>
                <path d="M27 3c6 5 15 8 22 9 2 .5 2 2 2 4 0 18-10 33-24 39C13 49 3 34 3 16c0-2 0-3.500 2-4 7-1 16-4 22-9z" fill="#e9dff0" stroke="url(#shield-pink)" strokeWidth="4" />
                <path d="M31 15L17 30h8l-3 13 15-16h-8z" fill="#4331b4" />
              </svg>
            </IconTile>
            <h3 className="text-[37px] font-medium text-[#2b2b2d]">Threat protection</h3>
            <span className="mb-1 rounded-full bg-[#fdeeee] px-7 py-1 text-[28px] leading-[42px] text-[#9a1c12]">Off</span>
            <button type="button" aria-label="Open threat protection" className="mr-[11px] mb-1 ml-auto">
              <Chevron className="h-9 w-5" />
            </button>
          </div>
          <p className="mt-[19px]">Turn on protection to resume blocking threats.</p>
        </article>
      </div>
    </section>
  );
}

export default function App() {
  return (
    <div className="h-screen bg-white p-[68px] font-['Inter',sans-serif]">
      <div className="flex h-full overflow-hidden rounded-[80px] bg-[#f7f7f7] shadow-[0_0_80px_rgba(0,0,0,0.24)]">
        <Sidebar />
        <main className="min-w-0 flex-1 pr-[7px]">
          <Header />
          <section className="relative mt-[19px] h-[699px]" aria-label="Connection">
            <div className="h-full overflow-hidden rounded-[42px]">
              <WorldMap />
            </div>
            <ConnectionCard />
          </section>
          <Recents />
          <Statistics />
        </main>
      </div>
    </div>
  );
}
